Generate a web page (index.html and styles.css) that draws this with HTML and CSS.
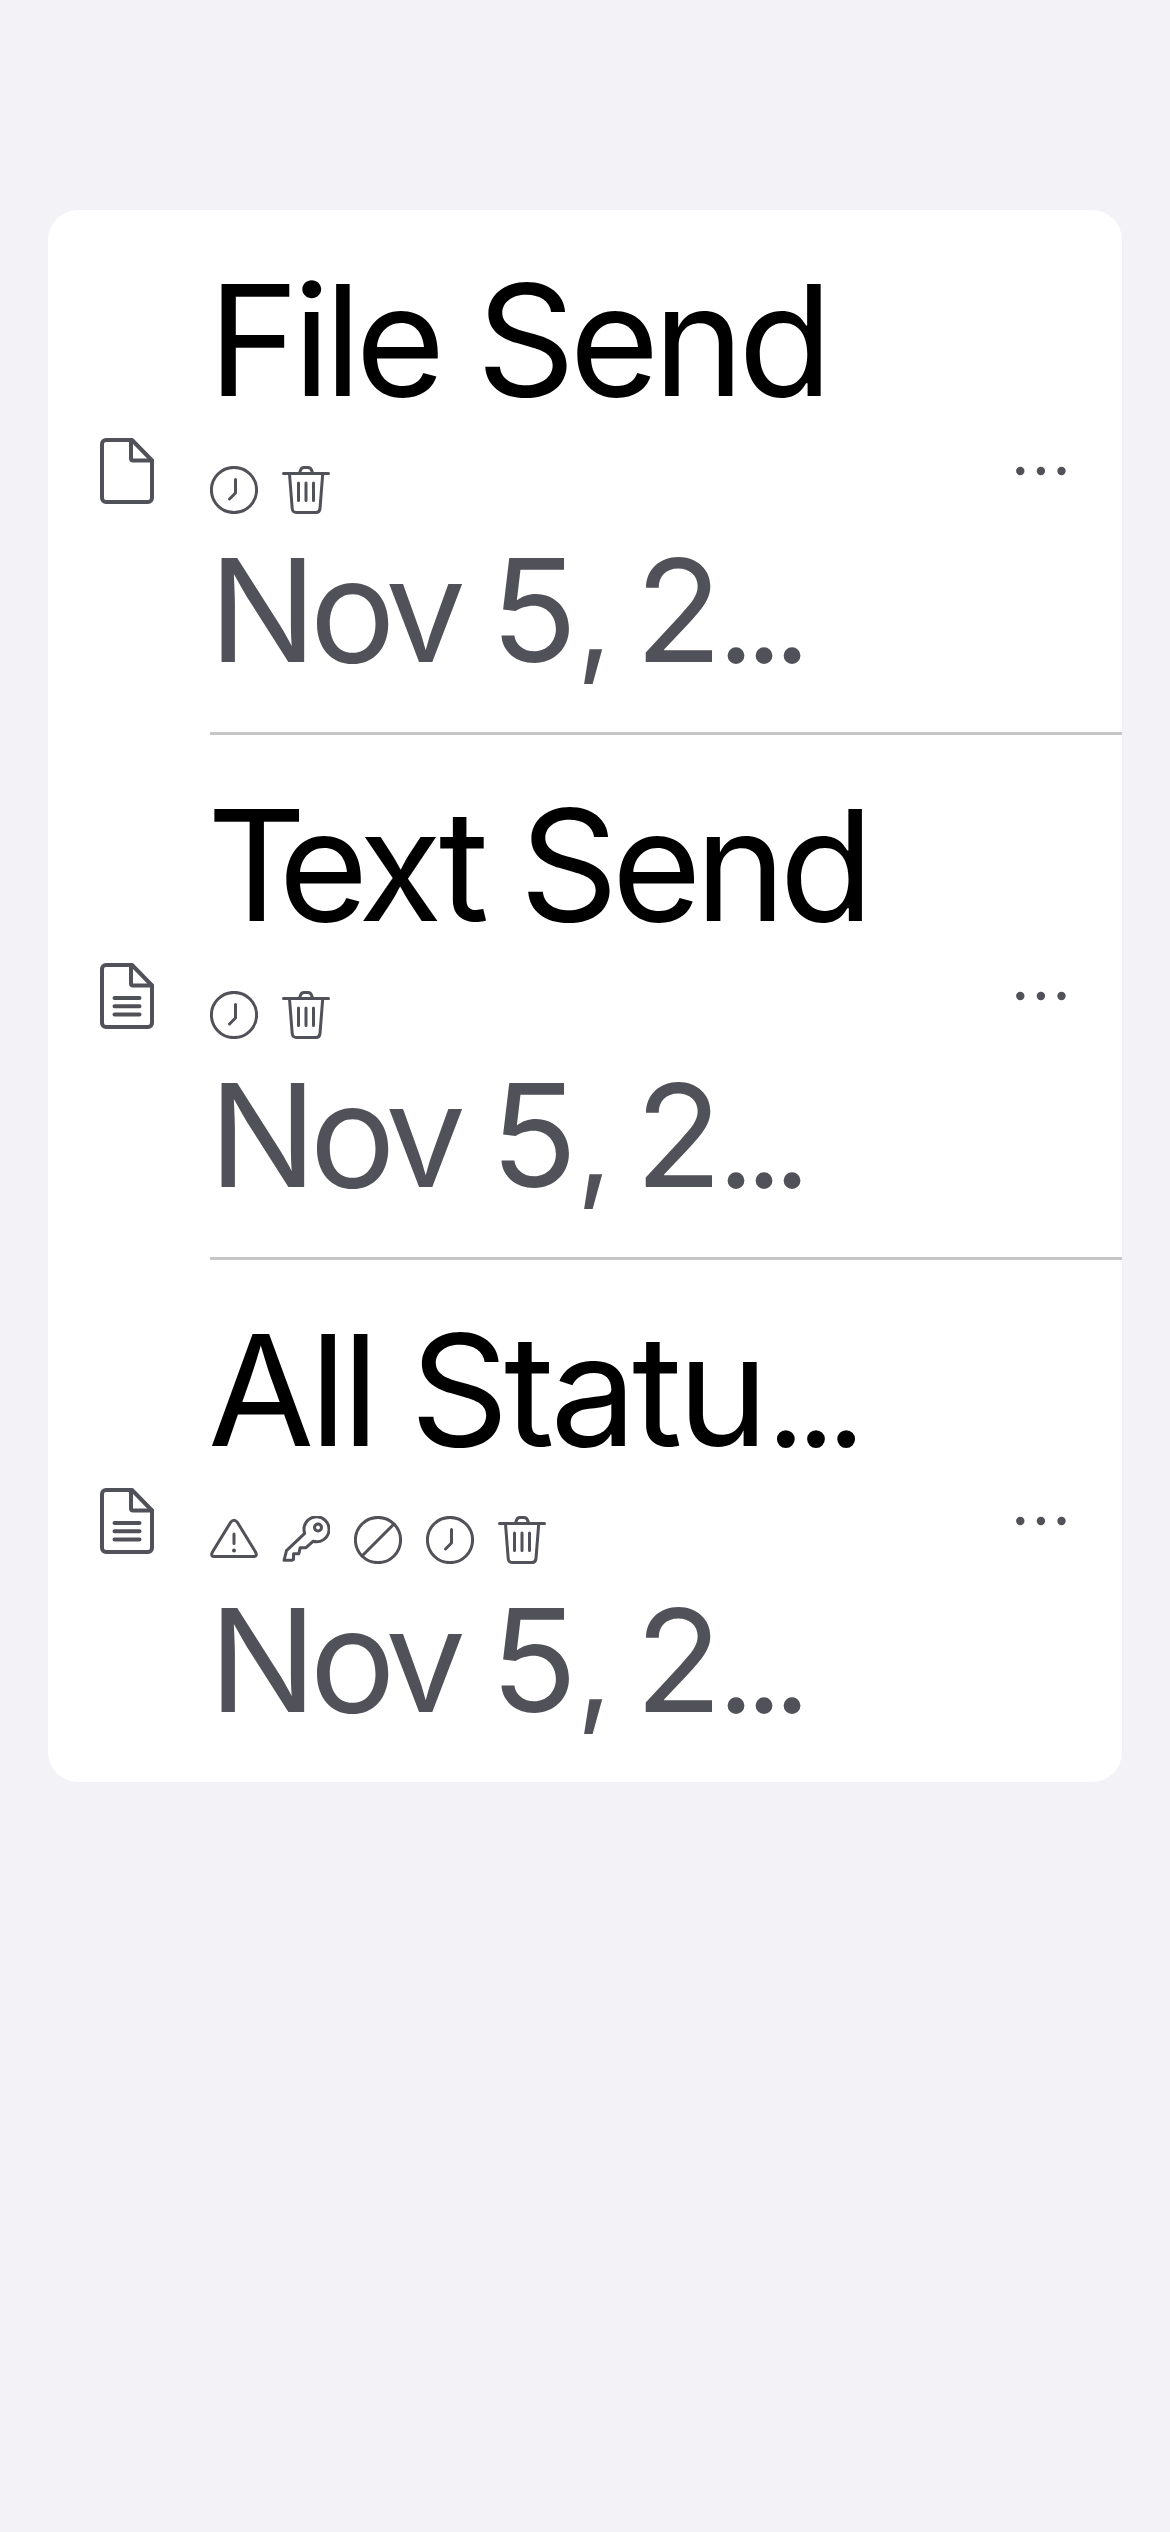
FILE: index.html
```html
<!DOCTYPE html>
<html lang="en">
<head>
<meta charset="utf-8">
<title>Sends</title>
<link rel="stylesheet" href="styles.css">
</head>
<body>
<svg class="sprite" aria-hidden="true">
  <symbol id="file" viewBox="0 0 54 66">
    <path d="M6 2H32L52 22.500V60a4 4 0 0 1-4 4H6a4 4 0 0 1-4-4V6a4 4 0 0 1 4-4Z"/>
    <path d="M31 2V20.500a2 2 0 0 0 2 2H52"/>
  </symbol>
  <symbol id="lines" viewBox="0 0 54 66">
    <path d="M14.500 35H39.500M14.500 43.300H39.500M14.500 51.600H39.500"/>
  </symbol>
  <symbol id="clock" viewBox="0 0 48 48">
    <circle cx="24" cy="24" r="22.600"/>
    <path d="M25.500 13.500V27L19.500 33"/>
  </symbol>
  <symbol id="trash" viewBox="0 0 48 48">
    <path d="M1.500 7.500H46.500M17.500 7L18.600 4Q19.500 1.500 22 1.500H26Q28.500 1.500 29.500 4L30.600 7M7.500 8L10.200 42.500Q10.600 46.500 14.500 46.500H34Q37.600 46.500 38 42.500L40.700 8M16.500 17V34.500M24 17V34.500M31.500 17V34.500"/>
  </symbol>
  <symbol id="warning" viewBox="0 0 48 48">
    <path d="M20.700 6.200Q24 2.200 27.300 6.200L45.700 36.300Q47.600 40.500 43.500 40.600H4.500Q.4 40.500 2.300 36.300ZM24 18V27.500"/>
    <circle class="solid" cx="24" cy="34.500" r="2"/>
  </symbol>
  <symbol id="key" viewBox="0 0 48 48">
    <path d="M22.700 17.300A12.500 12.500 0 1 1 31 25.300L24 31.700H18.200L16.800 37.800H11.500V43.500L10 44.300H2L4.500 34.600L22.700 17.300Z"/>
    <circle cx="36" cy="11.500" r="3.500"/>
  </symbol>
  <symbol id="ban" viewBox="0 0 48 48">
    <circle cx="24" cy="24" r="22.600"/>
    <path d="M8 40L40 8"/>
  </symbol>
  <symbol id="more" viewBox="0 0 50 10">
    <circle class="solid" cx="4.300" cy="5" r="4.200"/>
    <circle class="solid" cx="24.900" cy="5" r="4.200"/>
    <circle class="solid" cx="45.500" cy="5" r="4.200"/>
  </symbol>
</svg>
<main class="list">
  <article class="row">
    <svg class="kind"><use href="#file"/></svg>
    <div class="body">
      <div class="content">
        <h2 class="title file-title">File Send</h2>
        <div class="status"><svg><use href="#clock"/></svg><svg><use href="#trash"/></svg></div>
        <p class="date">Nov 5<span class="comma">,</span> 2<span class="cut">…</span></p>
      </div>
      <svg class="more"><use href="#more"/></svg>
    </div>
  </article>
  <article class="row">
    <svg class="kind"><use href="#file"/><use href="#lines"/></svg>
    <div class="body">
      <div class="content">
        <h2 class="title text-title"><span class="kern">T</span>ext Send</h2>
        <div class="status"><svg><use href="#clock"/></svg><svg><use href="#trash"/></svg></div>
        <p class="date">Nov 5<span class="comma">,</span> 2<span class="cut">…</span></p>
      </div>
      <svg class="more"><use href="#more"/></svg>
    </div>
  </article>
  <article class="row">
    <svg class="kind"><use href="#file"/><use href="#lines"/></svg>
    <div class="body">
      <div class="content">
        <h2 class="title status-title">All Statu<span class="cut">…</span></h2>
        <div class="status"><svg><use href="#warning"/></svg><svg><use href="#key"/></svg><svg><use href="#ban"/></svg><svg><use href="#clock"/></svg><svg><use href="#trash"/></svg></div>
        <p class="date">Nov 5<span class="comma">,</span> 2<span class="cut">…</span></p>
      </div>
      <svg class="more"><use href="#more"/></svg>
    </div>
  </article>
</main>
</body>
</html>
```
FILE: styles.css
```css
* { box-sizing: border-box; margin: 0; padding: 0; }
body {
  min-height: 2532px;
  padding: 210px 48px 0;
  background: #f2f2f7;
  font-family: Inter, "Liberation Sans", sans-serif;
}
.sprite { display: none; }
svg {
  display: block;
  flex: none;
  fill: none;
  stroke: #515159;
  stroke-width: 3;
  stroke-linecap: round;
  stroke-linejoin: round;
}
.solid { fill: #515159; stroke: none; }
.list {
  background: #fff;
  border-radius: 30px;
  overflow: hidden;
}
.row {
  display: flex;
  align-items: flex-start;
  padding-left: 52px;
}
.kind { width: 54px; height: 66px; margin: 228px 56px 0 0; stroke-width: 4; }
.body {
  flex: 1;
  min-width: 0;
  height: 525px;
  display: flex;
  align-items: flex-start;
  border-bottom: 3px solid #c6c6c8;
}
.row:last-child .body { height: 522px; border-bottom: 0; }
.content { flex: 1; min-width: 0; padding-top: 35px; white-space: nowrap; }
.title {
  height: 190px;
  margin-left: -2px;
  font-size: 154px;
  line-height: 190px;
  font-weight: 400;
  color: #000;
}
.file-title { letter-spacing: -6px; }
.text-title { margin-left: -3px; letter-spacing: -6.5px; }
.text-title .kern { letter-spacing: -28px; }
.status-title { letter-spacing: -4.8px; word-spacing: -3px; }
.status { display: flex; gap: 24px; margin-top: 31px; }
.status svg { width: 48px; height: 48px; }
.date {
  height: 175px;
  margin: 8px 0 0 -1px;
  font-size: 143px;
  line-height: 175px;
  letter-spacing: -7.1px;
  word-spacing: -1.5px;
  color: #515159;
}
.comma {
  margin: 0 -2px 0 6px;
  font-size: .88em;
  line-height: 1;
}
/* Tighter truncation mark: smaller glyph, thickened to keep the dot size. */
.cut {
  margin-left: 7px;
  font-size: .68em;
  line-height: 1;
  letter-spacing: 0;
  vertical-align: 1px;
  -webkit-text-stroke: 4px currentColor;
}
.more { width: 50px; height: 10px; margin: 256px 56px 0 0; }
```
